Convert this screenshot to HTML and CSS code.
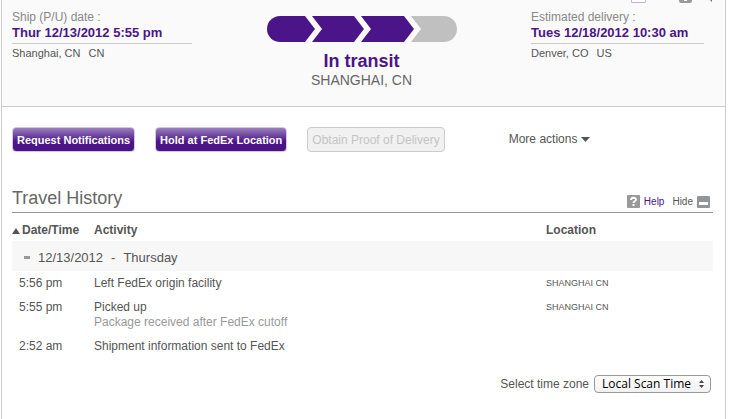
FILE: index.html
```html
<!DOCTYPE html>
<html lang="en">
<head>
  <meta charset="UTF-8">
  <title>Shipment Tracking</title>
  <link rel="stylesheet" href="styles.css">
</head>
<body>

  <main class="panel">

    <!-- Section: Shipment summary -->
    <section class="summary">
      <!-- Bottom edge of the toolbar icons -->
      <svg class="toolbar" width="84" height="4" viewBox="0 0 84 4" aria-hidden="true">
        <path d="M0.500 0V2.500H14.500V0" fill="#fff" stroke="#c3b2dc"/>
        <path d="M48 0H61V1Q61 3 59 3H50Q48 3 48 1Z" fill="#999"/>
        <path d="M53 0H56V1H53Z" fill="#fff"/>
        <path d="M79 0H81V2Z" fill="#8a5a9c"/>
      </svg>

      <div class="place">
        <div class="place-label">Ship (P/U) date :</div>
        <div class="place-date">Thur 12/13/2012 5:55 pm</div>
        <div class="place-city"><span>Shanghai, CN</span><span>CN</span></div>
      </div>

      <div class="status">
        <svg class="progress" width="190" height="26" viewBox="0 0 190 26" role="img" aria-label="Step 3 of 4">
          <path d="M13 0H38L48 13L38 26H13A13 13 0 0 1 13 0Z" fill="#4b1589"/>
          <path d="M45 0H87L97 13L87 26H45L55 13Z" fill="#4b1589"/>
          <path d="M94 0H137L147 13L137 26H94L104 13Z" fill="#4b1589"/>
          <path d="M144 0H177A13 13 0 0 1 177 26H144L154 13Z" fill="#c0c0c0"/>
        </svg>
        <div class="status-text">In transit</div>
        <div class="status-city">SHANGHAI, CN</div>
      </div>

      <div class="place">
        <div class="place-label">Estimated delivery :</div>
        <div class="place-date">Tues 12/18/2012 10:30 am</div>
        <div class="place-city"><span>Denver, CO</span><span>US</span></div>
      </div>
    </section>

    <!-- Section: Actions -->
    <section class="actions">
      <button type="button" class="btn">Request Notifications</button>
      <button type="button" class="btn">Hold at FedEx Location</button>
      <button type="button" class="btn" disabled>Obtain Proof of Delivery</button>
      <button type="button" class="more">More actions
        <svg width="9" height="5" viewBox="0 0 9 5" aria-hidden="true"><path d="M0 0H9L4.500 5Z" fill="#555"/></svg>
      </button>
    </section>

    <!-- Section: Travel history -->
    <section class="history" id="history">
      <div class="history-head">
        <h2>Travel History</h2>
        <div class="tools">
          <a href="#help" class="help">
            <svg width="13" height="13" viewBox="0 0 13 13" aria-hidden="true">
              <rect width="13" height="13" rx="1" fill="#999"/>
              <path d="M4 5C4 2 9 2 9 4.500C9 6.500 6.500 6 6.500 8" fill="none" stroke="#fff" stroke-width="2"/>
              <rect x="5.500" y="9" width="2" height="2" fill="#fff"/>
            </svg>
            Help
          </a>
          <a href="#history" class="hide">
            Hide
            <svg width="13" height="12" viewBox="0 0 13 12" aria-hidden="true">
              <rect width="13" height="12" rx="1" fill="#939598"/>
              <rect x="2" y="6" width="9" height="3" fill="#fff"/>
            </svg>
          </a>
        </div>
      </div>

      <table>
        <thead>
          <tr>
            <th class="col-time"><svg width="8" height="6" viewBox="0 0 8 6" aria-hidden="true"><path d="M4 0L8 6H0Z" fill="#555"/></svg>Date/Time</th>
            <th class="col-activity">Activity</th>
            <th>Location</th>
          </tr>
        </thead>
        <tbody>
          <tr class="day">
            <td colspan="3">
              <div class="day-row"><svg width="6" height="3" viewBox="0 0 6 3" aria-hidden="true"><rect width="6" height="3" fill="#999"/></svg><span>12/13/2012</span><span>-</span><span>Thursday</span></div>
            </td>
          </tr>
          <tr>
            <td class="time">5:56 pm</td>
            <td>Left FedEx origin facility</td>
            <td class="location">SHANGHAI CN</td>
          </tr>
          <tr>
            <td class="time">5:55 pm</td>
            <td>Picked up<div class="note">Package received after FedEx cutoff</div></td>
            <td class="location">SHANGHAI CN</td>
          </tr>
          <tr>
            <td class="time">2:52 am</td>
            <td>Shipment information sent to FedEx</td>
            <td></td>
          </tr>
        </tbody>
      </table>

      <div class="zone">
        <label for="zone">Select time zone</label>
        <div class="select-box">
          <select id="zone">
            <option>Local Scan Time</option>
          </select>
          <svg class="arrows" width="5" height="8" viewBox="0 0 5 8" aria-hidden="true"><path d="M2.500 0L5 3H0ZM0 5H5L2.500 8Z" fill="#444"/></svg>
        </div>
      </div>
    </section>
  </main>

</body>
</html>
```
FILE: styles.css
```css
* {
  box-sizing: border-box;
}

body {
  margin: 0;
  padding: 0 6px 0 1px;
  background: #fff;
  color: #555;
  font-family: "Liberation Sans", Arial, sans-serif;
  font-size: 12px;
  line-height: 15px;
}

.panel {
  min-height: 100vh;
  border: 1px solid #ccc;
  border-top: none;
  border-bottom: none;
}

svg {
  flex: none;
}

/* Shipment summary */
.summary {
  position: relative;
  display: grid;
  grid-template-columns: 180px 1fr 173px;
  padding: 10px 21px 18px 10px;
  background: #fafafa;
  border-bottom: 1px solid #ccc;
}

.toolbar {
  position: absolute;
  top: 0;
  right: 10px;
}

.place-label {
  color: #888;
}

.place-date {
  padding-bottom: 3px;
  border-bottom: 1px solid #ccc;
  color: #4b1589;
  font-size: 13px;
  font-weight: bold;
  white-space: nowrap;
}

.place-city {
  display: flex;
  gap: 8px;
  padding-top: 2px;
  font-size: 11px;
}

.status {
  display: flex;
  flex-direction: column;
  align-items: center;
  padding-top: 6px;
}

.status-text {
  margin-top: 8px;
  color: #4b1589;
  font-size: 18px;
  font-weight: bold;
  line-height: 22px;
}

.status-city {
  color: #666;
  font-size: 14px;
  line-height: 16px;
}

/* Action buttons */
.actions {
  display: flex;
  align-items: center;
  padding: 20px 10px 32px;
}

.btn {
  height: 25px;
  margin-right: 20px;
  padding: 0 4px;
  border: 1px solid #d3c8e2;
  border-radius: 4px;
  background: linear-gradient(#9a7fbd, #4b1589 60%);
  color: #fff;
  font-family: inherit;
  font-size: 11px;
  font-weight: bold;
}

.btn:disabled {
  border-color: #ccc;
  background: #f1f1f1;
  color: #c4c4c4;
  font-size: 12px;
  font-weight: normal;
}

.more {
  display: flex;
  align-items: center;
  gap: 4px;
  margin-left: 44px;
  padding: 0;
  border: none;
  background: none;
  color: #555;
  font: inherit;
}

/* Travel history */
.history {
  padding: 0 12px 0 10px;
}

.history-head {
  display: flex;
  align-items: flex-end;
  justify-content: space-between;
  border-bottom: 1px solid #999;
}

h2 {
  margin: 0;
  color: #666;
  font-size: 18px;
  font-weight: normal;
  line-height: 28px;
}

.tools {
  display: flex;
  gap: 8px;
  padding: 0 3px 3px 0;
  font-size: 10px;
}

.tools a {
  display: flex;
  align-items: center;
  gap: 4px;
  text-decoration: none;
}

.help {
  color: #4b1589;
}

.hide {
  color: #555;
}

table {
  width: 100%;
  border-collapse: collapse;
  table-layout: fixed;
}

th,
td {
  padding: 0 0 9px;
  text-align: left;
  vertical-align: top;
}

th {
  padding: 10px 0 3px;
}

th svg {
  margin-right: 2px;
}

.col-time {
  width: 82px;
}

.col-activity {
  width: 452px;
}

.day td {
  padding: 0 0 5px;
}

.day-row {
  display: flex;
  align-items: center;
  gap: 8px;
  height: 30px;
  padding: 2px 12px 0;
  background: #f7f7f7;
  font-size: 13px;
}

.time {
  padding-left: 7px;
}

.note {
  color: #999;
}

.location {
  font-size: 9px;
}

/* Time zone picker */
.zone {
  display: flex;
  align-items: center;
  justify-content: flex-end;
  gap: 5px;
  padding: 12px 2px 0 0;
}

.select-box {
  position: relative;
}

select {
  appearance: none;
  width: 117px;
  height: 18px;
  padding: 0 7px;
  border: 1px solid #999;
  border-radius: 4px;
  background: linear-gradient(#fff, #f1f1f1);
  color: #000;
  font-family: "Open Sans", sans-serif;
  font-size: 12px;
  line-height: 16px;
}

.arrows {
  position: absolute;
  top: 5px;
  right: 7px;
  pointer-events: none;
}
```
